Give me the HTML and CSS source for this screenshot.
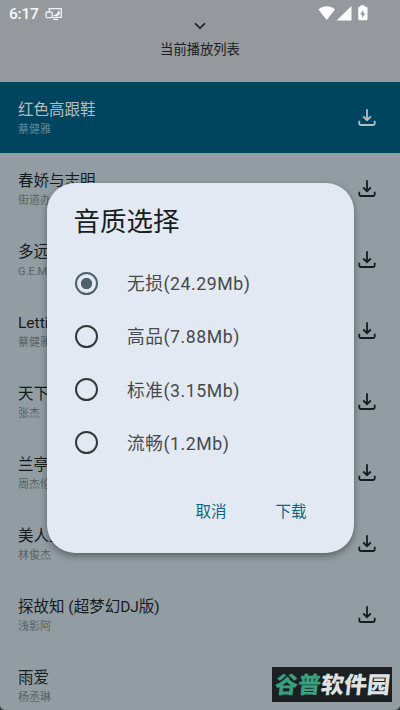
FILE: index.html
```html
<!DOCTYPE html>
<html lang="zh-CN">
<head>
<meta charset="utf-8">
<title>当前播放列表</title>
<link rel="stylesheet" href="styles.css">
</head>
<body>
<svg class="defs" aria-hidden="true">
  <symbol id="download" viewBox="0 0 20 20"><path d="M10 1.300v10.700M6.200 8.500l3.800 3.700 3.800-3.700M2.300 12.800v2.700a1.500 1.500 0 0 0 1.500 1.500h12.400a1.500 1.500 0 0 0 1.500-1.500v-2.700" fill="none" stroke="currentColor" stroke-width="1.8"/></symbol>
</svg>
<div class="screen">
  <header class="header">
    <div class="status">
      <span class="time">6:17</span>
      <svg class="cast" width="18" height="14" viewBox="0 0 18 14" fill="none" stroke="#f1f3f5" stroke-width="1.3"><path d="M4.200 4.500V1.700h12.100v8.600H8"/><rect x="1" y="5" width="6.200" height="5.600" rx="1"/><path d="M8 12.300h5M8.500 8.600c3-.3 4.700-1.700 5.400-4.800M11.300 9c1.900-.6 3-1.800 3.700-3.800"/></svg>
      <svg class="signals" width="52" height="17" viewBox="0 0 52 17"><path fill="#fff" d="M.5 4.500C5.300.2 12.300.2 17 4.500L8.700 15zM33.500 1v14.500H18.500z"/><path fill="#fff" fill-rule="evenodd" d="M42.500.3h4v1.500h1.700q1.300 0 1.300 1.300v10.900q0 1.300-1.300 1.300h-6.600q-1.300 0-1.300-1.300V3.100q0-1.300 1.300-1.300h.9zM45.300 4.800l-3.200 4.600h2v3.500l3.300-4.700h-2.100z"/></svg>
    </div>
    <svg class="chevron" width="12" height="8" viewBox="0 0 12 8"><path d="M1 1.300l5 4.800 5-4.800" fill="none" stroke="#16191b" stroke-width="1.500"/></svg>
    <h1 class="heading">当前播放列表</h1>
  </header>
  <main class="songs">
    <div class="song active"><div><p class="name">红色高跟鞋</p><p class="artist">蔡健雅</p></div><svg class="download"><use href="#download"/></svg></div>
    <div class="song"><div><p class="name">春娇与志明</p><p class="artist">街道办</p></div><svg class="download"><use href="#download"/></svg></div>
    <div class="song"><div><p class="name">多远</p><p class="artist">G.E.M.</p></div><svg class="download"><use href="#download"/></svg></div>
    <div class="song"><div><p class="name">Letti</p><p class="artist">蔡健雅</p></div><svg class="download"><use href="#download"/></svg></div>
    <div class="song"><div><p class="name">天下</p><p class="artist">张杰</p></div><svg class="download"><use href="#download"/></svg></div>
    <div class="song"><div><p class="name">兰亭</p><p class="artist">周杰伦</p></div><svg class="download"><use href="#download"/></svg></div>
    <div class="song"><div><p class="name">美人上</p><p class="artist">林俊杰</p></div><svg class="download"><use href="#download"/></svg></div>
    <div class="song"><div><p class="name">探故知 (超梦幻DJ版)</p><p class="artist">浅影阿</p></div><svg class="download"><use href="#download"/></svg></div>
    <div class="song"><div><p class="name">雨爱</p><p class="artist">杨丞琳</p></div></div>
  </main>
  <section class="dialog">
    <h2 class="dialog-title">音质选择</h2>
    <div class="options">
      <div class="option"><span class="radio checked"></span><span class="label">无损(24.29Mb)</span></div>
      <div class="option"><span class="radio"></span><span class="label">高品(7.88Mb)</span></div>
      <div class="option"><span class="radio"></span><span class="label">标准(3.15Mb)</span></div>
      <div class="option"><span class="radio"></span><span class="label">流畅(1.2Mb)</span></div>
    </div>
    <div class="actions"><span>取消</span><span>下载</span></div>
  </section>
  <div class="watermark"><span class="mark-text"><span class="green">谷普</span>软件园</span></div>
</div>
</body>
</html>
```
FILE: styles.css
```css
* { box-sizing: border-box; }
body, h1, h2, p { margin: 0; }
body {
  font-family: Roboto, "Noto Sans CJK SC", sans-serif;
  background: #303437;
}
.defs { position: absolute; width: 0; height: 0; }
.screen {
  position: relative;
  width: 400px;
  height: 710px;
  overflow: hidden;
  background: #919da3;
  border-radius: 0 0 5px 5px;
}
.header {
  height: 82px;
  display: flex;
  flex-direction: column;
  align-items: center;
  background: #95999d;
}
.status {
  width: 100%;
  height: 22px;
  padding: 5px 30px 0 9px;
  display: flex;
  align-items: flex-start;
}
.time {
  font-size: 15.5px;
  line-height: 18px;
  font-weight: 500;
  letter-spacing: -.2px;
  color: #f8f9fa;
  width: 36px;
}
.cast { margin-top: 2px; }
.signals { margin-left: auto; }
.chevron { flex: none; }
.heading {
  margin-top: 10px;
  font-size: 13.3px;
  line-height: 20px;
  font-weight: 400;
  color: #1c2023;
}
.song {
  height: 71px;
  padding: 2px 23px 0 18px;
  display: flex;
  align-items: center;
  justify-content: space-between;
  color: #171b1d;
}
.name {
  font-size: 15.5px;
  line-height: 22px;
}
.artist {
  font-size: 11px;
  line-height: 16px;
  margin-top: 1px;
  color: #596166;
}
.download {
  width: 20px;
  height: 20px;
  margin-bottom: 2px;
}
.active { background: #00455f; color: #b4bec3; }
.active .artist { color: #5c8899; }
.dialog {
  position: absolute;
  left: 47px;
  top: 183px;
  width: 306.5px;
  height: 370px;
  padding: 19px 26.5px 0;
  border-radius: 28px;
  background: #e2e9f2;
  box-shadow: 0 3px 7px rgba(0, 0, 0, .38);
}
.dialog-title {
  font-size: 26.5px;
  line-height: 40px;
  font-weight: 400;
  color: #191c20;
}
.options { margin-top: 14.600px; }
.option {
  height: 53.200px;
  padding-left: 1.5px;
  display: flex;
  align-items: center;
  gap: 29px;
  font-size: 17.7px;
  letter-spacing: .55px;
  color: #46494d;
}
.label { padding-bottom: 2px; }
.radio {
  width: 23px;
  height: 23px;
  border: 2.4px solid #34383b;
  border-radius: 50%;
}
.checked {
  border-color: #4c626d;
  background: radial-gradient(circle, #4c626d 5.300px, transparent 6px);
}
.actions {
  display: flex;
  justify-content: flex-end;
  gap: 49px;
  padding-right: 20.5px;
  margin-top: 31.400px;
  font-size: 15.5px;
  line-height: 22px;
  font-weight: 400;
  color: #0b6786;
}
.watermark {
  position: absolute;
  left: 272px;
  top: 667px;
  width: 120px;
  height: 35px;
  display: flex;
  align-items: center;
  justify-content: center;
  background: #1d2022;
}
.mark-text {
  font-size: 23px;
  line-height: 35px;
  font-weight: 900;
  color: #dfe1e3;
  white-space: nowrap;
  transform: translateY(1px) skewX(-6deg);
}
.green { color: #38a080; }
```
